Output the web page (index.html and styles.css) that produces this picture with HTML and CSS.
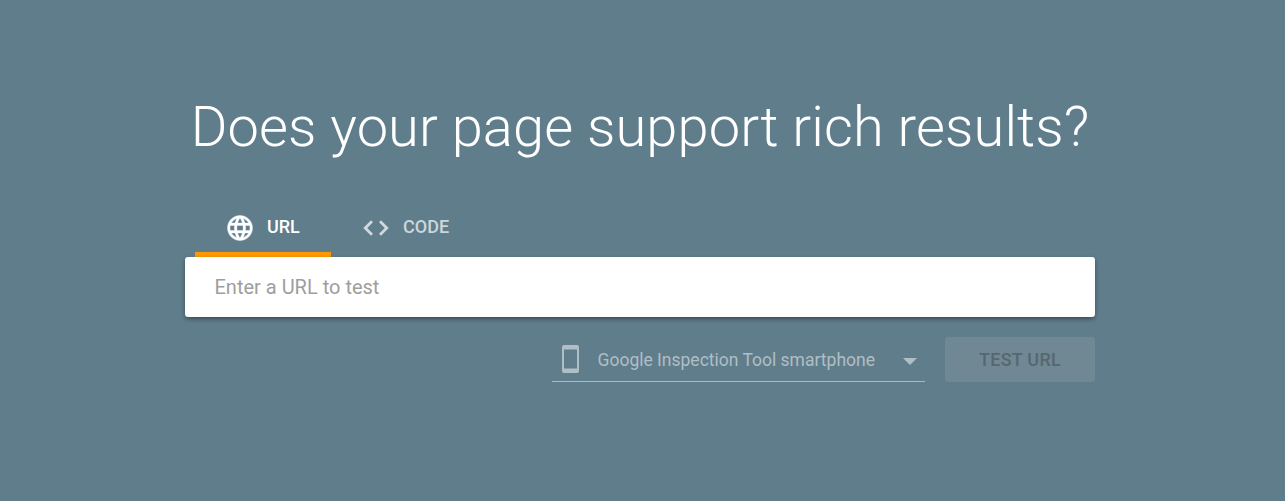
FILE: index.html
```html
<!DOCTYPE html>
<html lang="en">
<head>
<meta charset="utf-8">
<title>Rich Results Test</title>
<link rel="stylesheet" href="styles.css">
</head>
<body>
<main class="panel">
  <h1 class="title">Does your page support rich results?</h1>
  <div class="tabs">
    <div class="tab tab-active">
      <svg class="tab-icon" viewBox="0 0 24 24"><path fill="currentColor" stroke="currentColor" stroke-width="0.3" d="M11.99 2C6.47 2 2 6.48 2 12s4.47 10 9.99 10C17.52 22 22 17.52 22 12S17.52 2 11.99 2zm6.93 6h-2.95c-.32-1.25-.78-2.45-1.38-3.56 1.84.63 3.37 1.91 4.33 3.56zM12 4.04c.83 1.2 1.48 2.53 1.91 3.96h-3.82c.43-1.43 1.08-2.76 1.91-3.96zM4.26 14C4.1 13.36 4 12.69 4 12s.1-1.36.26-2h3.38c-.08.66-.14 1.32-.14 2 0 .68.06 1.34.14 2H4.26zm.82 2h2.95c.32 1.25.78 2.45 1.38 3.56-1.84-.63-3.37-1.9-4.33-3.56zm2.95-8H5.08c.96-1.66 2.49-2.93 4.33-3.56C8.81 5.55 8.35 6.75 8.03 8zM12 19.96c-.83-1.2-1.48-2.53-1.91-3.96h3.82c-.43 1.43-1.08 2.76-1.91 3.96zM14.34 14H9.66c-.09-.66-.16-1.32-.16-2 0-.68.07-1.35.16-2h4.68c.09.65.16 1.32.16 2 0 .68-.07 1.34-.16 2zm.25 5.56c.6-1.11 1.06-2.31 1.38-3.56h2.95c-.96 1.65-2.49 2.93-4.33 3.56zM16.36 14c.08-.66.14-1.32.14-2 0-.68-.06-1.34-.14-2h3.38c.16.64.26 1.31.26 2s-.1 1.36-.26 2h-3.38z"/></svg>
      <span>URL</span>
    </div>
    <div class="tab">
      <svg class="tab-icon" viewBox="0 0 24 24"><path fill="currentColor" stroke="currentColor" stroke-width="0.3" d="M9.4 16.6 4.8 12l4.6-4.6L8 6l-6 6 6 6 1.4-1.4zm5.2 0 4.6-4.6-4.6-4.6L16 6l6 6-6 6-1.4-1.4z"/></svg>
      <span>CODE</span>
    </div>
  </div>
  <div class="url-box">
    <input class="url-input" type="text" placeholder="Enter a URL to test">
  </div>
  <div class="actions">
    <div class="agent-select">
      <svg class="phone-icon" viewBox="0 0 17 28"><path fill="currentColor" fill-rule="evenodd" d="M2 0h13a2 2 0 0 1 2 2v24a2 2 0 0 1-2 2H2a2 2 0 0 1-2-2V2a2 2 0 0 1 2-2zm0 4.500v19h13v-19H2z"/></svg>
      <span class="agent-label">Google Inspection Tool smartphone</span>
      <span class="caret"></span>
    </div>
    <button class="test-btn" type="button">TEST URL</button>
  </div>
</main>
</body>
</html>
```
FILE: styles.css
```css
* {
  box-sizing: border-box;
}

html,
body {
  margin: 0;
  height: 100%;
}

body {
  background: #607d8b;
  font-family: Roboto, "Liberation Sans", sans-serif;
  overflow: hidden;
}

.panel {
  width: 910px;
  margin-left: 185px;
  padding-top: 93px;
  display: flex;
  flex-direction: column;
}

.title {
  margin: 0;
  font-size: 56px;
  line-height: 68px;
  font-weight: 300;
  letter-spacing: 0.1px;
  color: #fff;
  text-align: center;
  white-space: nowrap;
}

.tabs {
  display: flex;
  margin-top: 36px;
  padding-left: 10px;
  height: 60px;
}

.tab {
  display: flex;
  align-items: center;
  gap: 12px;
  height: 60px;
  padding: 3px 30px 0;
  font-size: 18px;
  font-weight: 500;
  color: rgba(255, 255, 255, 0.7);
  border-bottom: 5px solid transparent;
}

.tab-active {
  width: 136px;
  color: #fff;
  border-bottom-color: #ff9800;
}

.tab-icon {
  width: 30px;
  height: 30px;
  flex: none;
  margin-top: 3px;
}

.url-box {
  height: 60px;
  background: #fff;
  border-radius: 3px;
  box-shadow: 0 2px 4px rgba(0, 0, 0, 0.4);
  display: flex;
  align-items: center;
  padding: 0 29.5px;
}

.url-input {
  width: 100%;
  border: 0;
  outline: 0;
  padding: 0;
  background: transparent;
  font: 400 20px Roboto, "Liberation Sans", sans-serif;
  color: #212121;
}

.url-input::placeholder {
  color: #9e9e9e;
  opacity: 1;
}

.actions {
  display: flex;
  justify-content: flex-end;
  gap: 20px;
  margin-top: 20px;
}

.agent-select {
  width: 373px;
  height: 45px;
  display: flex;
  align-items: center;
  padding-left: 10px;
  border-bottom: 1px solid #a6bac3;
  color: #b0bec5;
}

.phone-icon {
  width: 17px;
  height: 28px;
  flex: none;
}

.agent-label {
  margin-left: 18.5px;
  padding-top: 1px;
  font-size: 17.5px;
  white-space: nowrap;
}

.caret {
  margin: 4px 8px 0 auto;
  width: 0;
  height: 0;
  border-left: 7px solid transparent;
  border-right: 7px solid transparent;
  border-top: 7px solid #b0bec5;
}

.test-btn {
  width: 150px;
  height: 45px;
  border: 0;
  border-radius: 3px;
  background: #708894;
  color: #56676f;
  font: 500 18px Roboto, "Liberation Sans", sans-serif;
  letter-spacing: 0.25px;
  padding: 0;
}
```
